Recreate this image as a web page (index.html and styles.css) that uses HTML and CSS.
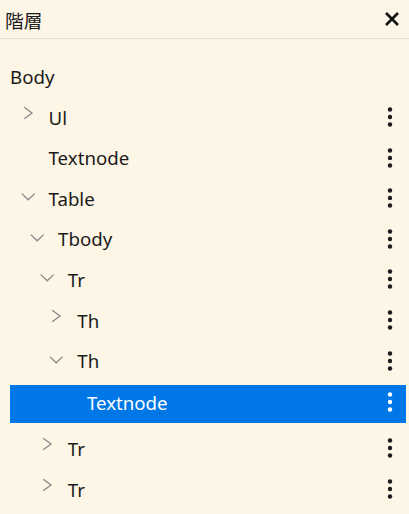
FILE: index.html
```html
<!DOCTYPE html>
<html lang="ja">
<head>
<meta charset="utf-8">
<title>階層</title>
<link rel="stylesheet" href="styles.css">
</head>
<body>
<div class="panel">
  <div class="header">
    <span class="title">階層</span>
    <button class="close" aria-label="close">
      <svg width="16" height="16" viewBox="0 0 16 16"><path d="M2 2 L14 14 M14 2 L2 14" stroke="#111" stroke-width="2.6" fill="none"/></svg>
    </button>
  </div>
  <div class="tree">
    <div class="node root"><span class="label">Body</span></div>

    <div class="node d1">
      <span class="toggle"><svg class="chev" width="24" height="24" viewBox="0 0 24 24"><path d="M8.2 2.2 L16 8 L8.2 13.8"/></svg></span>
      <span class="label">Ul</span>
      <span class="menu"><svg width="6" height="22" viewBox="0 0 6 22"><circle cx="3" cy="3.5" r="2.2"/><circle cx="3" cy="11" r="2.2"/><circle cx="3" cy="18.5" r="2.2"/></svg></span>
    </div>

    <div class="node d1">
      <span class="toggle"></span>
      <span class="label">Textnode</span>
      <span class="menu"><svg width="6" height="22" viewBox="0 0 6 22"><circle cx="3" cy="3.5" r="2.2"/><circle cx="3" cy="11" r="2.2"/><circle cx="3" cy="18.5" r="2.2"/></svg></span>
    </div>

    <div class="node d1">
      <span class="toggle"><svg class="chev" width="24" height="24" viewBox="0 0 24 24"><path d="M5.8 7.6 L12.2 13.8 L18.6 7.6"/></svg></span>
      <span class="label">Table</span>
      <span class="menu"><svg width="6" height="22" viewBox="0 0 6 22"><circle cx="3" cy="3.5" r="2.2"/><circle cx="3" cy="11" r="2.2"/><circle cx="3" cy="18.5" r="2.2"/></svg></span>
    </div>

    <div class="node d2">
      <span class="toggle"><svg class="chev" width="24" height="24" viewBox="0 0 24 24"><path d="M5.8 7.6 L12.2 13.8 L18.6 7.6"/></svg></span>
      <span class="label">Tbody</span>
      <span class="menu"><svg width="6" height="22" viewBox="0 0 6 22"><circle cx="3" cy="3.5" r="2.2"/><circle cx="3" cy="11" r="2.2"/><circle cx="3" cy="18.5" r="2.2"/></svg></span>
    </div>

    <div class="node d3">
      <span class="toggle"><svg class="chev" width="24" height="24" viewBox="0 0 24 24"><path d="M5.8 7.6 L12.2 13.8 L18.6 7.6"/></svg></span>
      <span class="label">Tr</span>
      <span class="menu"><svg width="6" height="22" viewBox="0 0 6 22"><circle cx="3" cy="3.5" r="2.2"/><circle cx="3" cy="11" r="2.2"/><circle cx="3" cy="18.5" r="2.2"/></svg></span>
    </div>

    <div class="node d4">
      <span class="toggle"><svg class="chev" width="24" height="24" viewBox="0 0 24 24"><path d="M8.2 2.2 L16 8 L8.2 13.8"/></svg></span>
      <span class="label">Th</span>
      <span class="menu"><svg width="6" height="22" viewBox="0 0 6 22"><circle cx="3" cy="3.5" r="2.2"/><circle cx="3" cy="11" r="2.2"/><circle cx="3" cy="18.5" r="2.2"/></svg></span>
    </div>

    <div class="node d4">
      <span class="toggle"><svg class="chev" width="24" height="24" viewBox="0 0 24 24"><path d="M5.8 7.6 L12.2 13.8 L18.6 7.6"/></svg></span>
      <span class="label">Th</span>
      <span class="menu"><svg width="6" height="22" viewBox="0 0 6 22"><circle cx="3" cy="3.5" r="2.2"/><circle cx="3" cy="11" r="2.2"/><circle cx="3" cy="18.5" r="2.2"/></svg></span>
    </div>

    <div class="node d5 selected">
      <span class="toggle"></span>
      <span class="label">Textnode</span>
      <span class="menu"><svg width="6" height="22" viewBox="0 0 6 22"><circle cx="3" cy="3.5" r="2.2"/><circle cx="3" cy="11" r="2.2"/><circle cx="3" cy="18.5" r="2.2"/></svg></span>
    </div>

    <div class="node d3">
      <span class="toggle"><svg class="chev" width="24" height="24" viewBox="0 0 24 24"><path d="M8.2 2.2 L16 8 L8.2 13.8"/></svg></span>
      <span class="label">Tr</span>
      <span class="menu"><svg width="6" height="22" viewBox="0 0 6 22"><circle cx="3" cy="3.5" r="2.2"/><circle cx="3" cy="11" r="2.2"/><circle cx="3" cy="18.5" r="2.2"/></svg></span>
    </div>

    <div class="node d3">
      <span class="toggle"><svg class="chev" width="24" height="24" viewBox="0 0 24 24"><path d="M8.2 2.2 L16 8 L8.2 13.8"/></svg></span>
      <span class="label">Tr</span>
      <span class="menu"><svg width="6" height="22" viewBox="0 0 6 22"><circle cx="3" cy="3.5" r="2.2"/><circle cx="3" cy="11" r="2.2"/><circle cx="3" cy="18.5" r="2.2"/></svg></span>
    </div>
  </div>
</div>
</body>
</html>
```

FILE: styles.css
```css
html, body {
  margin: 0;
  padding: 0;
}

body {
  background: #fdf5e6;
  color: #1b1b1b;
  font-family: "Noto Sans", "Noto Sans CJK JP", sans-serif;
  font-size: 18.7px;
  width: 409px;
  height: 514px;
  overflow: hidden;
}

.panel {
  display: flex;
  flex-direction: column;
}

.header {
  height: 38px;
  border-bottom: 1px solid #e6dccb;
  display: flex;
  align-items: center;
  justify-content: space-between;
  padding: 0 9px 0 5px;
}

.title {
  font-family: "Noto Sans CJK JP", "Noto Sans", sans-serif;
  font-size: 18.7px;
  color: #1b1b1b;
}

.close {
  border: 0;
  background: none;
  padding: 0;
  width: 16px;
  height: 16px;
  display: flex;
  cursor: pointer;
}

.tree {
  display: flex;
  flex-direction: column;
  margin: 0 3px 0 10px;
  padding-top: 18.5px;
}

.node {
  height: 38px;
  box-sizing: border-box;
  display: flex;
  align-items: center;
  margin-bottom: 2.6px;
  flex: none;
}

.d1 { padding-left: 0; }
.d2 { padding-left: 9.6px; }
.d3 { padding-left: 19.2px; }
.d4 { padding-left: 28.8px; }
.d5 { padding-left: 38.4px; }

.toggle {
  width: 35px;
  height: 24px;
  flex: none;
  display: flex;
  justify-content: center;
  align-items: center;
  margin-right: 3.5px;
}

.chev path {
  fill: none;
  stroke: #888;
  stroke-width: 1.3;
  stroke-linejoin: miter;
}

.label {
  white-space: nowrap;
}

.menu {
  margin-left: auto;
  width: 32px;
  height: 24px;
  display: flex;
  justify-content: center;
  align-items: center;
  flex: none;
}

.menu circle {
  fill: #1b1b1b;
}

.selected {
  background: #0077e6;
  color: #ffffff;
  margin-top: 2.75px;
  margin-bottom: 6.45px;
  padding-bottom: 4px;
}

.selected .menu circle {
  fill: #ffffff;
}
```
